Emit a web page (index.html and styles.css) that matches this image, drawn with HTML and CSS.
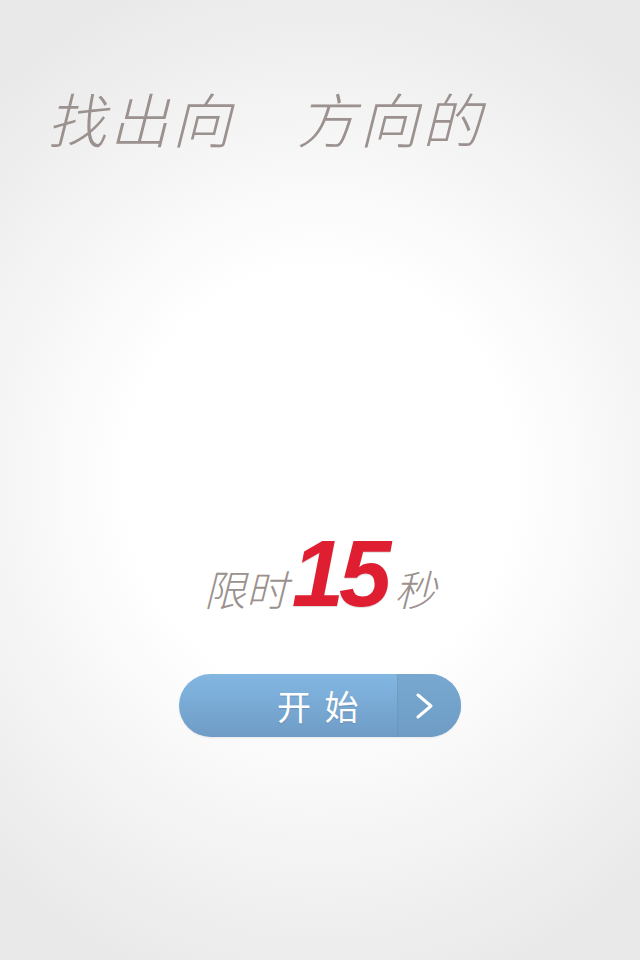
FILE: index.html
```html
<!DOCTYPE html>
<html lang="zh">
<head>
<meta charset="utf-8">
<link rel="stylesheet" href="styles.css">
</head>
<body>
<main class="screen">
  <h1 class="title">找出向　方向的</h1>
  <div class="timer">
    <span class="timer-label">限时</span><span class="timer-num">15</span><span class="timer-label unit">秒</span>
  </div>
  <button class="start">
    <span class="start-label">开&nbsp;始</span>
    <span class="start-arrow">
      <svg width="20" height="26" viewBox="0 0 20 26"><path d="M3 2 L16 13 L3 24" fill="none" stroke="#fff" stroke-width="3" stroke-linecap="round" stroke-linejoin="round"/></svg>
    </span>
  </button>
</main>
</body>
</html>
```

FILE: styles.css
```css
html, body {
  margin: 0;
  padding: 0;
}
.screen {
  width: 640px;
  height: 960px;
  display: flex;
  flex-direction: column;
  align-items: center;
  background: radial-gradient(ellipse 75% 55% at 50% 50%, #ffffff 40%, #e9e9e9 100%);
  font-family: "Noto Sans CJK SC", "Noto Sans", sans-serif;
  overflow: hidden;
}
.title {
  align-self: flex-start;
  margin: 88px 0 0 47px;
  font-size: 59px;
  line-height: 1;
  font-weight: 300;
  font-style: italic;
  letter-spacing: 3.5px;
  color: #9b918e;
  white-space: nowrap;
}
.timer {
  margin-top: 380px;
  display: flex;
  align-items: baseline;
  color: #9b918e;
}
.timer-label {
  font-size: 42px;
  font-weight: 300;
  font-style: italic;
  line-height: 1;
}
.timer-label.unit {
  margin-left: 8px;
}
.timer-num {
  font-family: "Liberation Sans", Arial, sans-serif;
  font-weight: bold;
  font-style: italic;
  font-size: 94px;
  line-height: 1;
  letter-spacing: -5px;
  color: #e01e32;
  margin-left: 4px;
  text-shadow: 0 1px 1px rgba(0,0,0,0.15);
}
.start {
  margin-top: 53px;
  width: 282px;
  height: 63px;
  padding: 0;
  border: 0;
  border-radius: 32px;
  overflow: hidden;
  display: flex;
  background: linear-gradient(#82b7e2, #6f9cc6);
  cursor: pointer;
  box-shadow: 0 1px 2px rgba(0,0,0,0.08);
}
.start-label {
  flex: 1;
  display: flex;
  align-items: center;
  padding-left: 98px;
  font-family: "Noto Sans CJK SC", sans-serif;
  font-size: 34px;
  font-weight: 400;
  color: #fff;
  letter-spacing: 3px;
  text-shadow: 0 1px 1px rgba(0,0,0,0.15);
}
.start-arrow {
  width: 64px;
  display: flex;
  align-items: center;
  justify-content: flex-start;
  padding-left: 18px;
  box-sizing: border-box;
  background: linear-gradient(#78a8d0, #6e9cc4);
  box-shadow: inset 1px 0 1px rgba(0,0,0,0.05);
}
```
